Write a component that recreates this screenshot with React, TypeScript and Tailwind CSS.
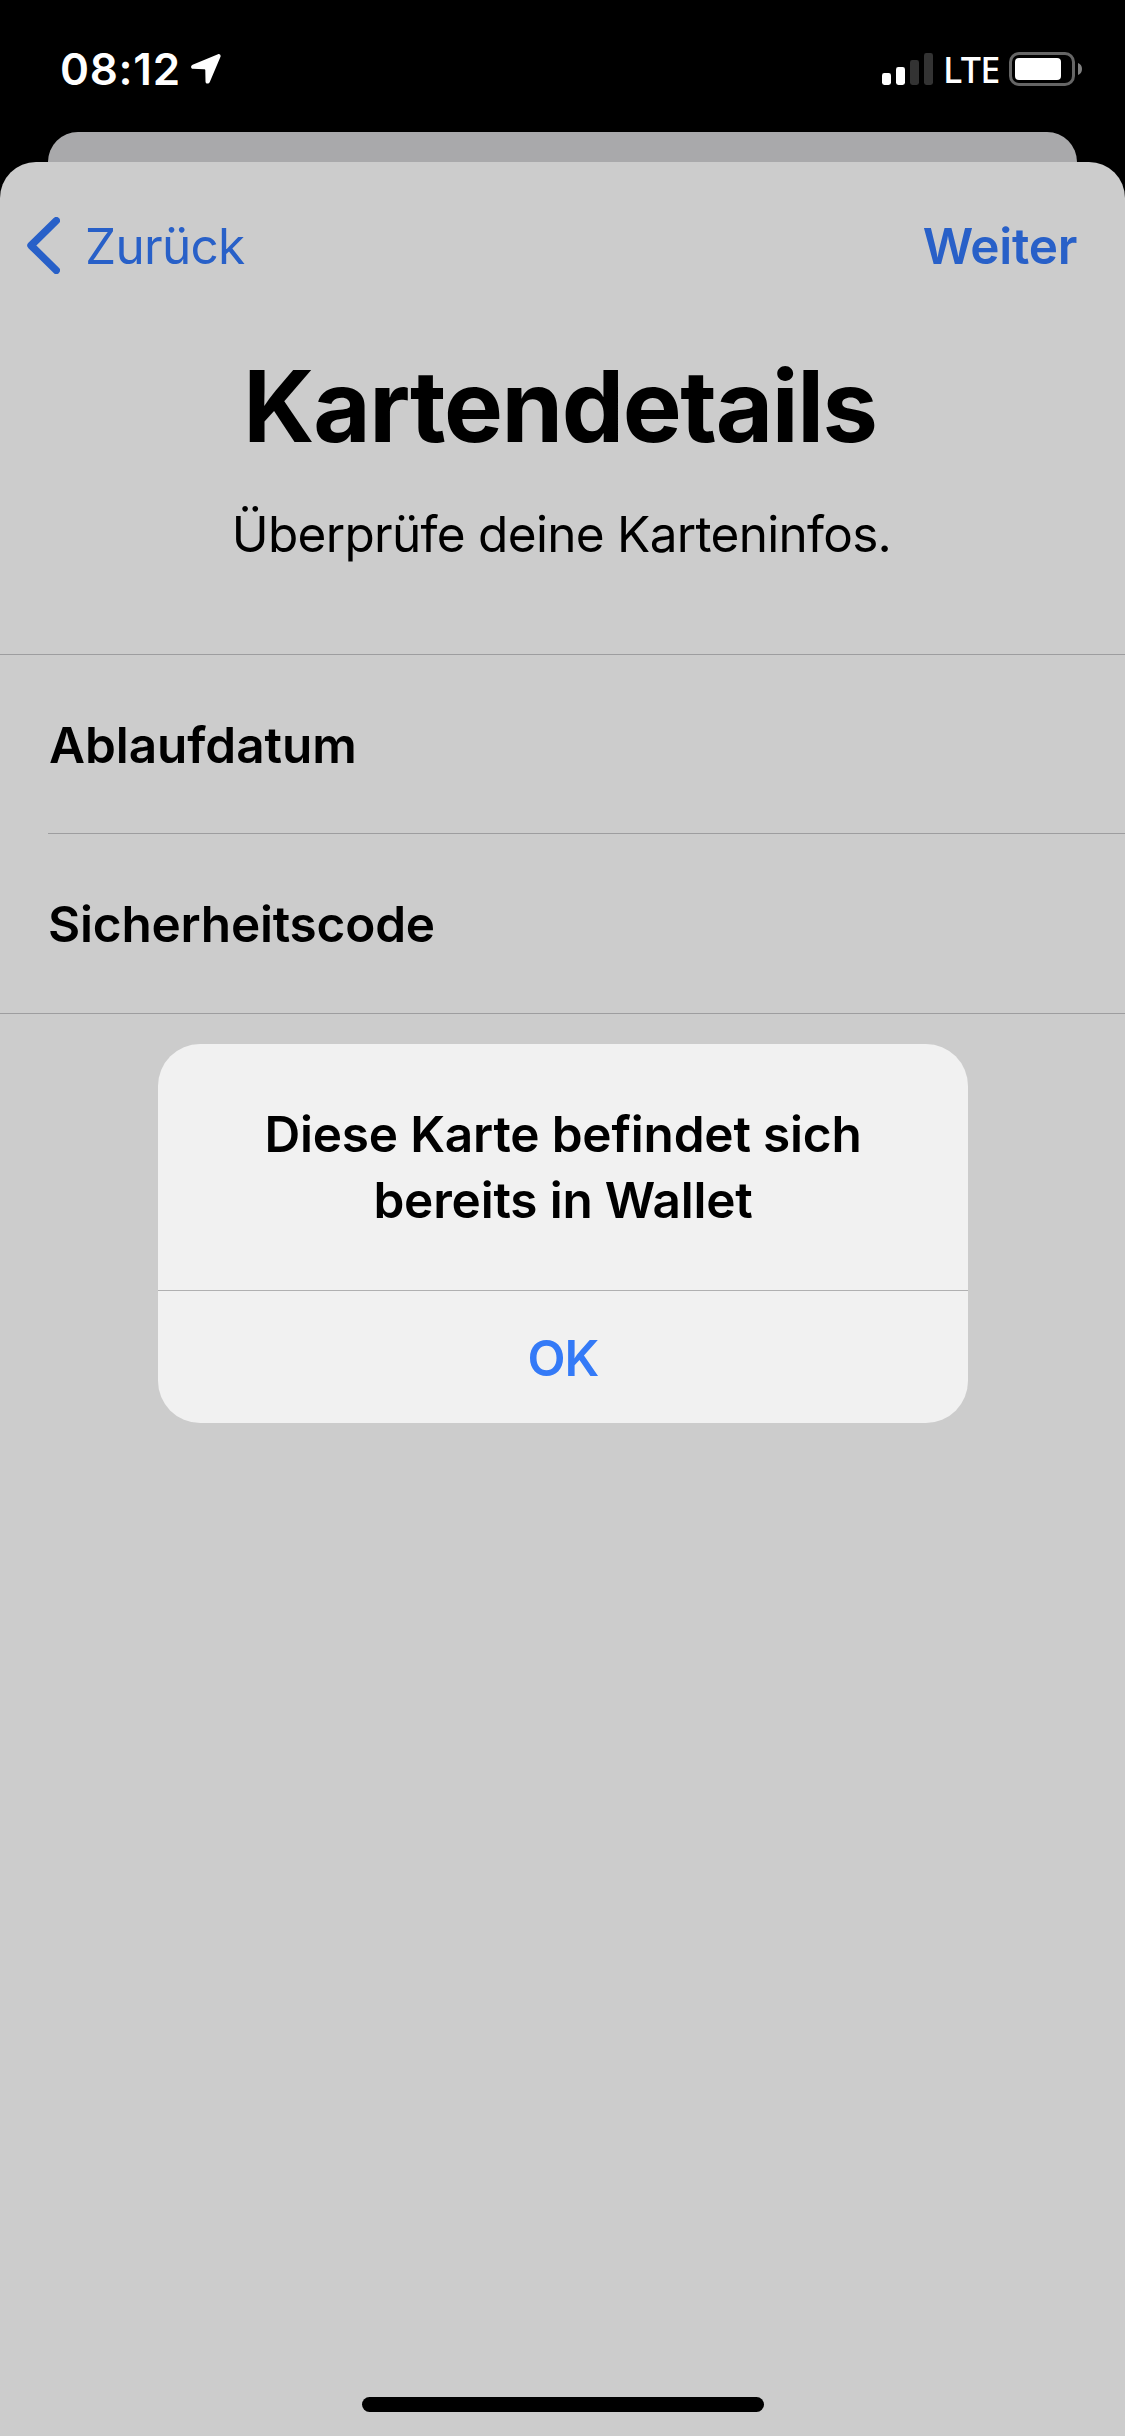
function SignalBars() {
  return (
    <svg className="h-8 w-[51px]" viewBox="0 0 51 32">
      <rect x="0" y="20" width="9" height="12" rx="2.4" fill="#fff" />
      <rect x="14" y="14" width="9" height="18" rx="2.4" fill="#fff" />
      <rect x="28" y="7" width="9" height="25" rx="2.4" fill="#333" />
      <rect x="42" y="0" width="9" height="32" rx="2.4" fill="#333" />
    </svg>
  );
}

function Battery() {
  return (
    <svg className="h-[34px] w-[73px]" viewBox="0 0 73 34">
      <rect x="1.5" y="1.5" width="63" height="31" rx="8.5" fill="none" stroke="#666" strokeWidth="3" />
      <rect x="6" y="6" width="46" height="22" rx="4" fill="#fff" />
      <path d="M69 11c2.600 1 4 3.300 4 6s-1.400 5-4 6z" fill="#808080" />
    </svg>
  );
}

function LocationArrow() {
  return (
    <svg className="h-[30px] w-[30px]" viewBox="0 0 30 30">
      <path
        d="M27 0.200 L1.600 10.800 C-0.600 11.800 -0.300 14.700 1.900 14.800 L13 15.200 C13.900 15.200 14.300 15.500 14.300 16.300 L14.500 27.400 C14.600 30 17.700 30.300 18.700 28.200 L29.500 2.800 C30.100 1.100 28.600 -0.400 27 0.200 Z"
        fill="#fff"
      />
    </svg>
  );
}

function StatusBar() {
  return (
    <div className="flex h-[132px] items-start justify-between pl-[60px] pr-[43px] text-white">
      <div className="flex h-[138px] items-center">
        <span className="w-[131px] whitespace-nowrap text-[44px] font-semibold tracking-[0.7px]">08:12</span>
        <LocationArrow />
      </div>
      <div className="flex h-[138px] items-center">
        <SignalBars />
        <span className="ml-[10px] w-[66px] whitespace-nowrap pt-px font-['Noto_Sans',sans-serif] text-[36px] font-medium tracking-[-0.8px]">
          LTE
        </span>
        <Battery />
      </div>
    </div>
  );
}

const fields = [
  { label: 'Ablaufdatum', className: 'h-[178px] pl-px tracking-[-0.05px]' },
  { label: 'Sicherheitscode', className: 'h-[180px] border-t border-[#9d9d9f] tracking-[-0.2px]' },
];

export default function App() {
  return (
    <div className="relative flex h-[2436px] w-[1125px] flex-col overflow-hidden bg-black font-['Inter',sans-serif] text-black">
      <StatusBar />

      {/* Sheet behind */}
      <div className="mx-12 h-[30px] rounded-t-[30px] bg-[#a9a9ab]" />

      {/* Sheet */}
      <div className="flex flex-1 flex-col rounded-t-[36px] bg-[#ccc]">
        <div className="flex h-[168px] items-center justify-between pl-[27px] pr-12 text-[49.5px] text-[#2860c8]">
          <button className="flex items-center">
            <svg className="mb-px h-[57px] w-[33px]" viewBox="0 0 33 57" fill="none">
              <path d="M29.300 3.700 L4 28.500 L29.300 53.300" stroke="currentColor" strokeWidth="7.400" strokeLinecap="round" strokeLinejoin="round" />
            </svg>
            <span className="ml-[25px] tracking-[-0.7px]">Zurück</span>
          </button>
          <button className="font-semibold tracking-[-0.3px]">Weiter</button>
        </div>

        <h1 className="mt-4 pr-[5px] text-center text-[99px] font-bold leading-[120px] tracking-[-1.4px]">Kartendetails</h1>
        <p className="mt-[38px] pr-[2px] text-center text-[49.5px] leading-[60px] tracking-[-0.7px]">Überprüfe deine Karteninfos.</p>

        <div className="mt-[90px] border-y border-[#9d9d9f]">
          {fields.map(({ label, className }) => (
            <div key={label} className={`ml-12 flex items-center pt-[2px] text-[49.5px] font-semibold ${className}`}>
              {label}
            </div>
          ))}
        </div>
      </div>

      {/* Alert */}
      <div className="absolute left-[158px] top-[1044px] flex h-[379px] w-[810px] flex-col overflow-hidden rounded-[42px] bg-[#f1f1f1] text-center">
        <p className="h-[246px] px-12 pt-[57px] text-[49.5px] font-semibold leading-[66px] tracking-[-0.18px]">
          Diese Karte befindet sich
          <br />
          bereits in Wallet
        </p>
        <button className="flex-1 border-t border-[#b0b0b1] pt-[2px] text-[49.5px] font-semibold tracking-[-0.8px] text-[#347af7]">
          OK
        </button>
      </div>

      {/* Home indicator */}
      <div className="absolute bottom-6 left-[362px] h-[15px] w-[402px] rounded-full bg-black" />
    </div>
  );
}
